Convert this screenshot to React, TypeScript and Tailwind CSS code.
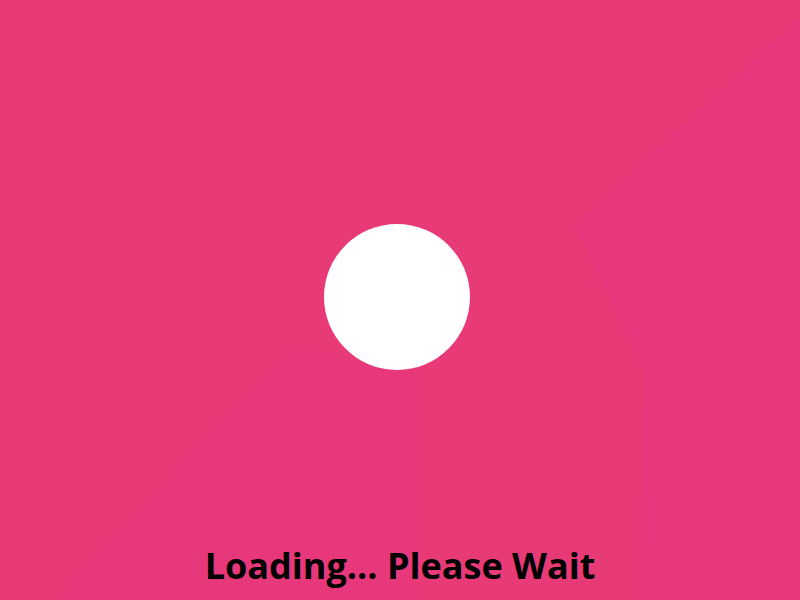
export default function App() {
  return (
    <div className="relative flex flex-col items-center w-full h-screen overflow-hidden bg-[#e83a76]">
      {/* faint low-poly backdrop */}
      <svg
        className="absolute inset-0 w-full h-full"
        viewBox="0 0 800 600"
        preserveAspectRatio="none"
      >
        <polygon points="800,18 575,225 645,372 640,600 800,600" fill="#e8387e" />
        <polygon points="292,345 415,372 415,600 55,600" fill="#e8387c" />
      </svg>

      <div className="relative flex-1 flex items-center justify-center w-full pt-[46px]">
        <div className="w-[146px] h-[146px] rounded-full bg-white -ml-[6px]" />
      </div>

      <h1
        className="relative pb-[16px] text-[36px] leading-none font-bold text-black"
        style={{ fontFamily: '"Open Sans", sans-serif' }}
      >
        Loading... Please Wait
      </h1>
    </div>
  );
}
